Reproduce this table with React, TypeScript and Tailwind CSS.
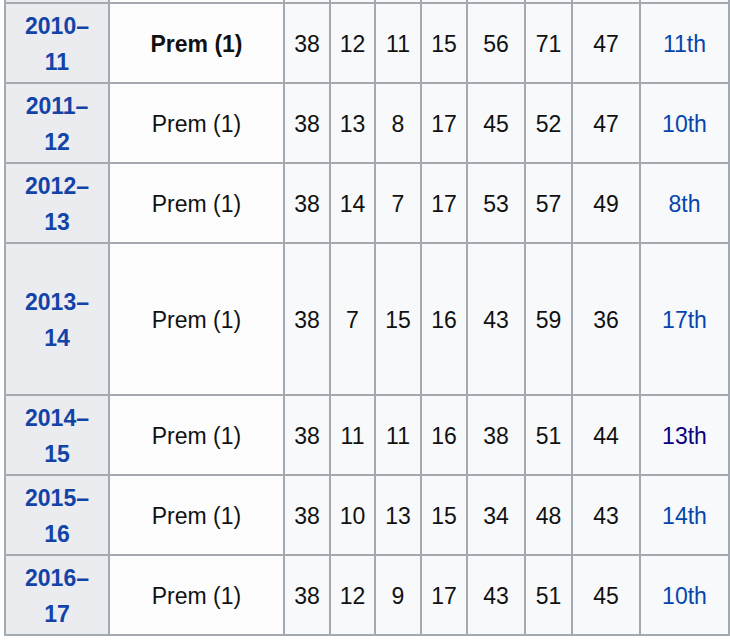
import React from "react";

type Row = {
  y1: string;
  y2: string;
  bold?: boolean;
  nums: string[];
  pos: string;
  visited?: boolean;
};

const rows: Row[] = [
  { y1: "2010–", y2: "11", bold: true, nums: ["38", "12", "11", "15", "56", "71", "47"], pos: "11th" },
  { y1: "2011–", y2: "12", nums: ["38", "13", "8", "17", "45", "52", "47"], pos: "10th" },
  { y1: "2012–", y2: "13", nums: ["38", "14", "7", "17", "53", "57", "49"], pos: "8th" },
  { y1: "2013–", y2: "14", nums: ["38", "7", "15", "16", "43", "59", "36"], pos: "17th" },
  { y1: "2014–", y2: "15", nums: ["38", "11", "11", "16", "38", "51", "44"], pos: "13th", visited: true },
  { y1: "2015–", y2: "16", nums: ["38", "10", "13", "15", "34", "48", "43"], pos: "14th" },
  { y1: "2016–", y2: "17", nums: ["38", "12", "9", "17", "43", "51", "45"], pos: "10th" },
];

export default function App() {
  return (
    <div className="w-[730px] h-[640px] bg-white" style={{ fontFamily: '"Liberation Sans", Arial, sans-serif' }}>
      <div className="ml-[4px] w-[726px] bg-[#a2a9b1] px-[2px] pb-[2px] grid gap-[2px] grid-cols-[102px_173px_44px_43px_44px_44px_56px_45px_66px_87px] grid-rows-[2px_78px_78px_78px_150px_78px_78px_78px] text-[23px] text-[#111]">
        <div className="bg-[#eaecf0]" />
        <div className="bg-[#fdfdfd]" />
        {Array.from({ length: 8 }).map((_, i) => (
          <div key={i} className="bg-[#f8f9fa]" />
        ))}
        {rows.map((r, i) => (
          <React.Fragment key={i}>
            <div className="bg-[#eaecf0] flex flex-col items-center justify-center pt-[1px] font-bold text-[#1443a8] leading-[36px]">
              <span>{r.y1}</span>
              <span>{r.y2}</span>
            </div>
            <div className={`bg-[#fdfdfd] flex items-center justify-center pt-[2px] ${r.bold ? "font-bold" : ""}`}>
              Prem (1)
            </div>
            {r.nums.map((n, j) => (
              <div key={j} className="bg-[#f8f9fa] flex items-center justify-center pt-[2px]">
                {n}
              </div>
            ))}
            <div className={`bg-[#f8f9fa] flex items-center justify-center pt-[2px] ${r.visited ? "text-[#0b0080]" : "text-[#0645ad]"}`}>
              {r.pos}
            </div>
          </React.Fragment>
        ))}
      </div>
    </div>
  );
}
